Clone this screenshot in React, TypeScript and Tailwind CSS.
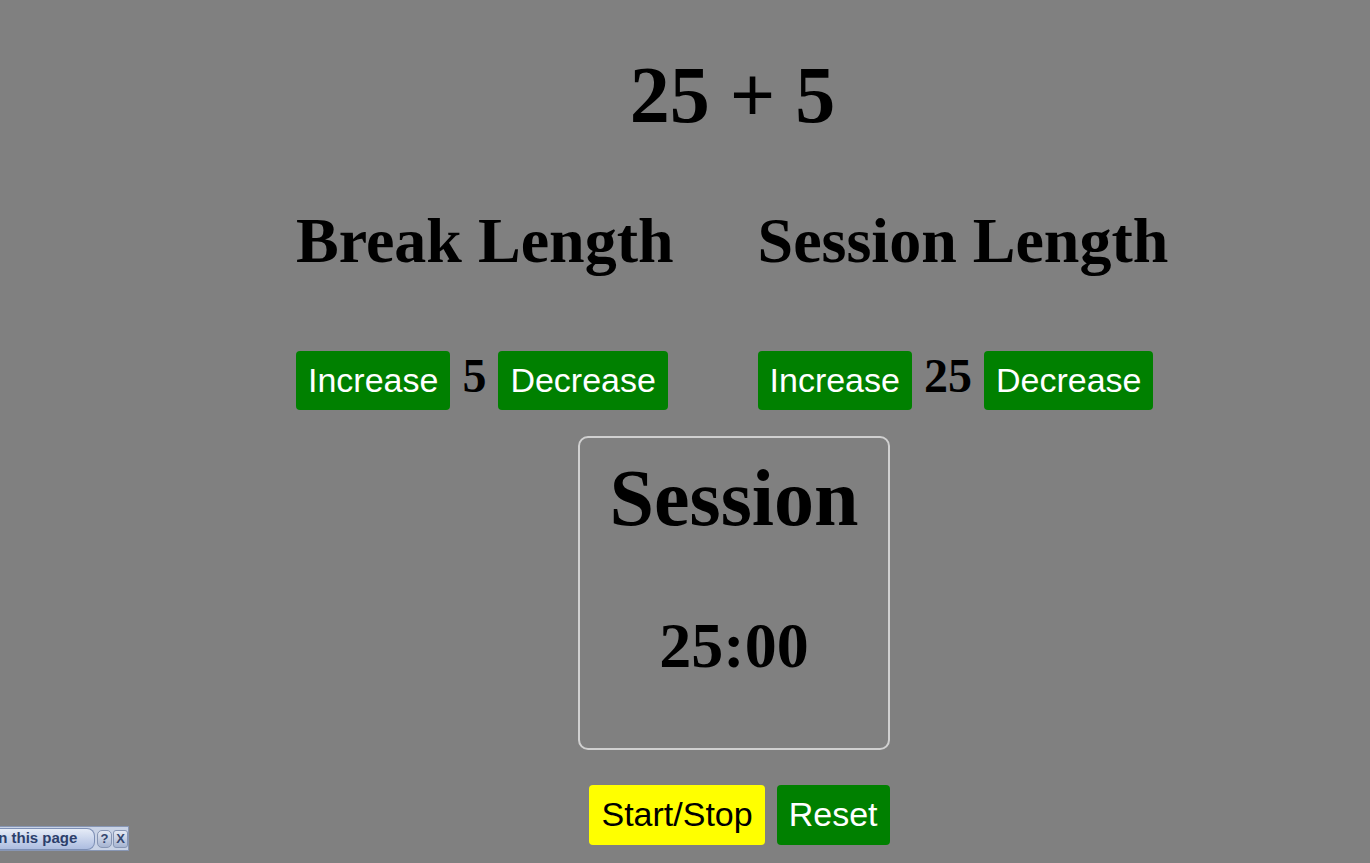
import { useState } from "react";

const serif = "font-['Liberation_Serif','Times_New_Roman',serif] font-bold";
const sans = "font-['Liberation_Sans',Arial,sans-serif]";

// contador de longitud (break / session)
const LengthControl = ({
  title,
  value,
  onInc,
  onDec,
}: {
  title: string;
  value: number;
  onInc: () => void;
  onDec: () => void;
}) => (
  <div className="flex flex-col">
    <h2 className={`${serif} text-[64px] leading-[1.107] whitespace-nowrap`}>{title}</h2>
    <div className="flex items-baseline gap-3 mt-[73px]">
      <button
        onClick={onInc}
        className={`${sans} bg-[#008000] text-white text-[34px] leading-[1.149] px-3 py-[10px] rounded-[4px]`}
      >
        Increase
      </button>
      <span className={`${serif} text-[48px] leading-[1.107]`}>{value}</span>
      <button
        onClick={onDec}
        className={`${sans} bg-[#008000] text-white text-[34px] leading-[1.149] px-3 py-[10px] rounded-[4px]`}
      >
        Decrease
      </button>
    </div>
  </div>
);

export default function App() {
  const [breakLen, setBreakLen] = useState(5);
  const [sessionLen, setSessionLen] = useState(25);

  return (
    <div className="min-h-[863px] bg-[#808080] text-black relative overflow-hidden">
      <div className="ml-[296px] w-[873px] flex flex-col">
        {/* Titulo */}
        <h1 className={`${serif} text-[80px] leading-[1.107] text-center mt-[51px]`}>25 + 5</h1>

        {/* Controles */}
        <div className="flex gap-[84px] mt-[66px]">
          <LengthControl
            title="Break Length"
            value={breakLen}
            onInc={() => setBreakLen(Math.min(60, breakLen + 1))}
            onDec={() => setBreakLen(Math.max(1, breakLen - 1))}
          />
          <LengthControl
            title="Session Length"
            value={sessionLen}
            onInc={() => setSessionLen(Math.min(60, sessionLen + 1))}
            onDec={() => setSessionLen(Math.max(1, sessionLen - 1))}
          />
        </div>

        {/* Timer */}
        <div className="mt-[26px] self-center ml-[3px] w-[312px] h-[314px] border-2 border-[#d0d0d0] rounded-[10px] flex flex-col items-center">
          <div className={`${serif} text-[80px] leading-[1.107] mt-[16px]`}>Session</div>
          <div className={`${serif} text-[64px] leading-[1.107] mt-[68px]`}>
            {String(sessionLen).padStart(2, "0")}:00
          </div>
        </div>

        {/* Botones */}
        <div className="flex justify-center gap-3 mt-[35px] pl-[14px]">
          <button
            className={`${sans} bg-[#ffff00] text-black text-[34px] leading-[1.149] px-3 py-[10px] rounded-[4px]`}
          >
            Start/Stop
          </button>
          <button
            onClick={() => {
              setBreakLen(5);
              setSessionLen(25);
            }}
            className={`${sans} bg-[#008000] text-white text-[34px] leading-[1.149] px-3 py-[10px] rounded-[4px]`}
          >
            Reset
          </button>
        </div>
      </div>

      {/* widget abajo a la izquierda */}
      <div className="absolute left-0 top-[826px] w-[129px] h-[25px] bg-[#c9d3e6] border border-[#8796b4] border-l-0 flex items-center overflow-hidden">
        <div className="h-[22px] w-[95px] shrink-0 rounded-r-[8px] border border-[#7d8fb5] border-l-0 bg-gradient-to-b from-[#e6ecf7] to-[#adbde0] flex items-center overflow-hidden">
          <span className={`${sans} font-bold text-[15px] text-[#2c3e6b] whitespace-nowrap ml-[-11px]`}>
            on this page
          </span>
        </div>
        <div className="ml-[2px] w-[15px] h-[18px] rounded-[5px] border border-[#8796b4] bg-gradient-to-b from-[#e4e9f3] to-[#a7b5d2] flex items-center justify-center">
          <span className={`${sans} font-bold text-[13px] leading-none text-[#34466e]`}>?</span>
        </div>
        <div className="ml-[1px] w-[15px] h-[18px] rounded-[3px] border border-[#8796b4] bg-gradient-to-b from-[#e4e9f3] to-[#a7b5d2] flex items-center justify-center">
          <span className={`${sans} font-bold text-[13px] leading-none text-[#34466e]`}>X</span>
        </div>
      </div>
    </div>
  );
}
